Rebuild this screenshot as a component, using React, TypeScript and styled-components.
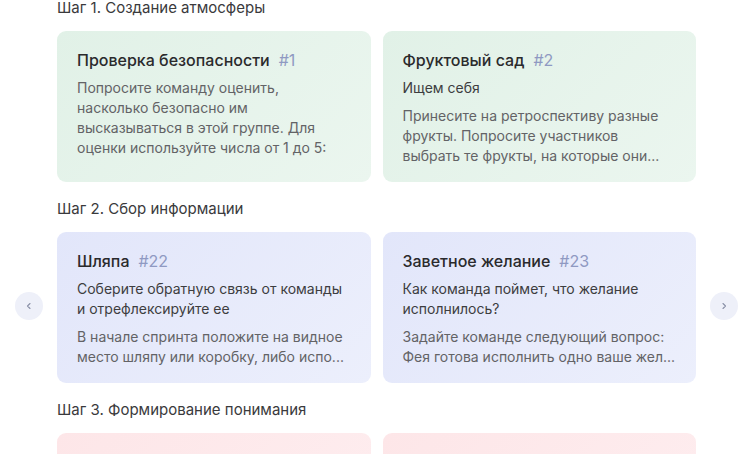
import React from 'react';
import styled, { createGlobalStyle } from 'styled-components';

const GlobalStyle = createGlobalStyle`
  html, body {
    margin: 0;
    padding: 0;
    background: #ffffff;
    font-family: Inter, "Noto Sans", sans-serif;
    overflow: hidden;
  }
`;

type Tone = 'green' | 'blue' | 'pink';

const tones: Record<Tone, string> = {
  green: 'linear-gradient(135deg, #e1f1e7 0%, #ebf6ef 100%)',
  blue: 'linear-gradient(135deg, #e2e6fa 0%, #eceffc 100%)',
  pink: 'linear-gradient(135deg, #fde6e8 0%, #feeef0 100%)',
};

const Page = styled.div`
  position: relative;
  width: 753px;
  height: 454px;
  padding: 0 57px;
  box-sizing: border-box;
  overflow: hidden;
`;

const Steps = styled.div`
  display: flex;
  flex-direction: column;
  gap: 19px;
`;

const Step = styled.section`
  display: flex;
  flex-direction: column;
  gap: 15px;
`;

const StepTitle = styled.h3`
  margin: 0;
  font-size: 15px;
  line-height: 16px;
  font-weight: 400;
  color: #3a3a3c;
`;

const Row = styled.div`
  display: grid;
  grid-template-columns: 1fr 1fr;
  gap: 12px;
`;

const Card = styled.div<{ $tone: Tone }>`
  height: 151px;
  box-sizing: border-box;
  padding: 19px 20px;
  border-radius: 9px;
  background: ${(p) => tones[p.$tone]};
  display: flex;
  flex-direction: column;
  gap: 8px;
  overflow: hidden;
`;

const CardTitle = styled.div`
  font-size: 16px;
  line-height: 20px;
  font-weight: 500;
  color: #2a2a2c;
  white-space: nowrap;
`;

const Num = styled.span`
  margin-left: 9px;
  font-weight: 400;
  color: #8f99c2;
`;

const Lead = styled.div`
  font-size: 14px;
  line-height: 20px;
  color: #3d3d40;
`;

const Text = styled.div`
  font-size: 14px;
  line-height: 20px;
  color: #636366;
`;

const NavButton = styled.button<{ $side: 'left' | 'right' }>`
  position: absolute;
  top: 292px;
  ${(p) => (p.$side === 'left' ? 'left: 15px;' : 'right: 15px;')}
  width: 28px;
  height: 28px;
  border-radius: 50%;
  border: none;
  padding: 0;
  background: #eef0f9;
  display: flex;
  align-items: center;
  justify-content: center;
  cursor: pointer;
`;

const Chevron = ({ dir }: { dir: 'left' | 'right' }) => (
  <svg width="8" height="8" viewBox="0 0 8 8" fill="none">
    <path
      d={dir === 'left' ? 'M5 1.5 L2.5 4 L5 6.5' : 'M3 1.5 L5.5 4 L3 6.5'}
      stroke="#8a90a8"
      strokeWidth="1.1"
      strokeLinecap="round"
      strokeLinejoin="round"
    />
  </svg>
);

interface Item {
  title: string;
  num: number;
  lead?: string;
  text?: string;
}

interface StepData {
  title: string;
  tone: Tone;
  items: Item[];
}

// descriptions come already shortened, the way the list shows them
const steps: StepData[] = [
  {
    title: 'Шаг 1. Создание атмосферы',
    tone: 'green',
    items: [
      {
        title: 'Проверка безопасности',
        num: 1,
        text: 'Попросите команду оценить, насколько безопасно им высказываться в этой группе. Для оценки используйте числа от 1 до 5:',
      },
      {
        title: 'Фруктовый сад',
        num: 2,
        lead: 'Ищем себя',
        text: 'Принесите на ретроспективу разные фрукты. Попросите участников выбрать те фрукты, на которые они...',
      },
    ],
  },
  {
    title: 'Шаг 2. Сбор информации',
    tone: 'blue',
    items: [
      {
        title: 'Шляпа',
        num: 22,
        lead: 'Соберите обратную связь от команды и отрефлексируйте ее',
        text: 'В начале спринта положите на видное место шляпу или коробку, либо испо...',
      },
      {
        title: 'Заветное желание',
        num: 23,
        lead: 'Как команда поймет, что желание исполнилось?',
        text: 'Задайте команде следующий вопрос: Фея готова исполнить одно ваше жел...',
      },
    ],
  },
  {
    title: 'Шаг 3. Формирование понимания',
    tone: 'pink',
    items: [
      { title: '', num: 0 },
      { title: '', num: 0 },
    ],
  },
];

export default function App() {
  return (
    <>
      <GlobalStyle />
      <Page>
        <Steps>
          {steps.map((step) => (
            <Step key={step.title}>
              <StepTitle>{step.title}</StepTitle>
              <Row>
                {step.items.map((item, i) => (
                  <Card key={i} $tone={step.tone}>
                    {item.title && (
                      <CardTitle>
                        {item.title}
                        <Num>#{item.num}</Num>
                      </CardTitle>
                    )}
                    {item.lead && <Lead>{item.lead}</Lead>}
                    {item.text && <Text>{item.text}</Text>}
                  </Card>
                ))}
              </Row>
            </Step>
          ))}
        </Steps>
        <NavButton $side="left" aria-label="Назад">
          <Chevron dir="left" />
        </NavButton>
        <NavButton $side="right" aria-label="Вперёд">
          <Chevron dir="right" />
        </NavButton>
      </Page>
    </>
  );
}
